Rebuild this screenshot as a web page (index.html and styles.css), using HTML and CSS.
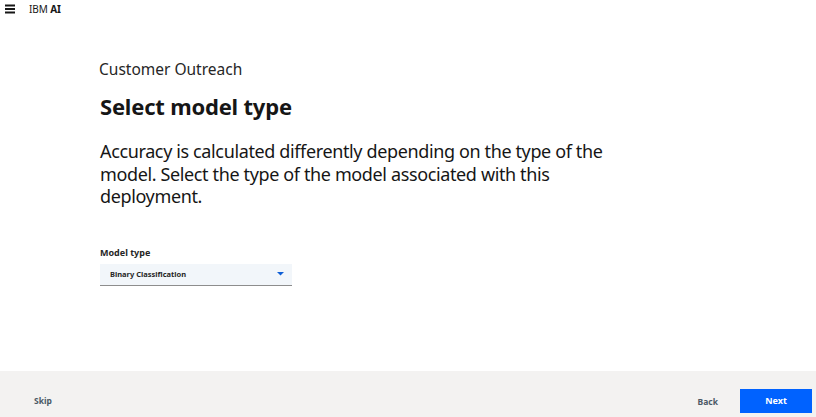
FILE: index.html
```html
<!DOCTYPE html>
<html>
<head>
<meta charset="utf-8">
<link rel="stylesheet" href="styles.css">
</head>
<body>
<div class="page">
  <header class="topbar">
    <svg class="menu" width="10" height="10" viewBox="0 0 10 10"><rect x="0" y="0.5" width="10" height="2" fill="#161616"/><rect x="0" y="4" width="10" height="2" fill="#161616"/><rect x="0" y="7.5" width="10" height="2" fill="#161616"/></svg>
    <span class="brand">IBM <b>AI</b></span>
  </header>
  <main class="content">
    <div class="eyebrow">Customer Outreach</div>
    <h1 class="title">Select model type</h1>
    <p class="lead">Accuracy is calculated differently depending on the type of the model. Select the type of the model associated with this deployment.</p>
    <div class="field">
      <label class="label">Model type</label>
      <div class="select">
        <span>Binary Classification</span>
        <svg width="7" height="4" viewBox="0 0 7 4"><path d="M0 0H7L3.5 3.5Z" fill="#0f5fd6"/></svg>
      </div>
    </div>
  </main>
  <footer class="footer">
    <span class="skip">Skip</span>
    <div class="actions">
      <span class="back">Back</span>
      <span class="next">Next</span>
    </div>
  </footer>
</div>
</body>
</html>
```
FILE: styles.css
```css
* { box-sizing: border-box; }
html, body { margin: 0; padding: 0; background: #fff; }
body { font-family: "Noto Sans", "Liberation Sans", sans-serif; color: #161616; }
.page { width: 816px; height: 417px; display: flex; flex-direction: column; }
.topbar { height: 17px; display: flex; align-items: center; padding-left: 5px; }
.menu { display: block; }
.brand { margin-left: 14px; font-size: 10px; letter-spacing: -0.1px; color: #161616; }
.brand b { font-weight: 700; }
.content { flex: 1; padding: 42px 0 0 100px; }
.eyebrow { font-size: 15.5px; line-height: 20px; color: #262626; margin-left: -1px; }
.title { font-size: 22px; font-weight: 700; margin: 12px 0 0; line-height: 30px; letter-spacing: -0.2px; }
.lead { font-size: 18px; line-height: 22.5px; width: 512px; margin: 19px 0 0; letter-spacing: -0.37px; }
.field { margin-top: 39px; width: 192px; }
.label { display: block; font-size: 9px; font-weight: 700; line-height: 12px; color: #262626; }
.select { margin-top: 5px; height: 22px; background: #f2f6fa; border-bottom: 1px solid #8d8d8d; display: flex; align-items: center; justify-content: space-between; padding: 0 8px 0 10px; font-size: 7.5px; font-weight: 700; color: #262626; }
.select svg { display: block; }
.footer { height: 46px; background: #f3f2f1; display: flex; align-items: center; justify-content: space-between; padding: 0 4px 0 34px; }
.skip, .back { font-size: 8.5px; font-weight: 700; color: #4b5a66; padding-top: 12px; }
.actions { display: flex; align-items: flex-end; padding-top: 13px; }
.back { margin-right: 22px; padding-top: 0; padding-bottom: 6px; }
.next { width: 72px; height: 24px; background: #0062ff; color: #fff; font-size: 9px; font-weight: 700; display: flex; align-items: center; justify-content: center; }
```
